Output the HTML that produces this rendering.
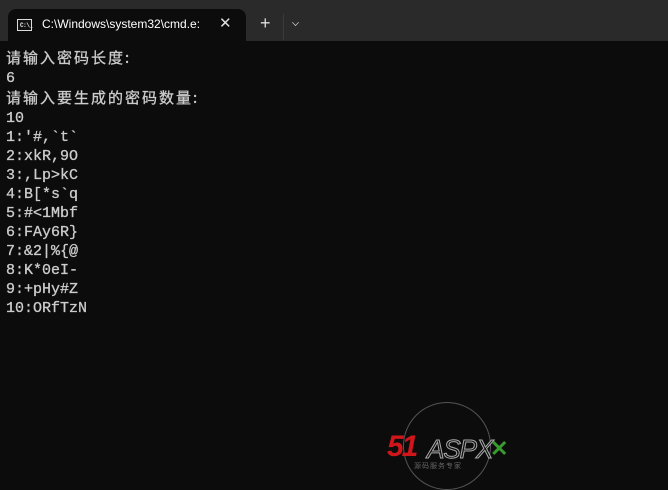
<!DOCTYPE html>
<html><head><meta charset="utf-8"><style>
*{margin:0;padding:0;box-sizing:border-box}
body{width:668px;height:490px;background:#0c0c0c;overflow:hidden;position:relative;font-family:"Liberation Sans",sans-serif}
.bar{position:absolute;left:0;top:0;width:668px;height:41px;background:#2a2a2a}
.tab{position:absolute;left:8px;top:9px;width:238px;height:32px;background:#0c0c0c;border-radius:8px 8px 0 0}
.icon{position:absolute;left:17px;top:19px;width:15px;height:12px;border:1px solid #ddd;background:#111}
.icon span{position:absolute;left:2px;top:2px;font:bold 6px "Liberation Mono",monospace;color:#eee;letter-spacing:-0.5px}
.title{position:absolute;left:42px;top:17px;font-size:12px;color:#fff;width:164px;overflow:hidden;white-space:nowrap}
.x{position:absolute;left:219px;top:14px;color:#ddd;font-size:15px}
.plus{position:absolute;left:260px;top:13px;color:#ddd;font-size:18px}
.sep{position:absolute;left:283px;top:14px;width:1px;height:26px;background:#3a3a3a}
.chev{position:absolute;left:292px;top:19px;width:7px;height:7px;border-right:1.3px solid #ccc;border-bottom:1.3px solid #ccc;transform:rotate(45deg) scale(.7)}
pre{position:absolute;left:6px;top:48px;font:15px/19px "Liberation Mono","Noto Sans CJK SC",monospace;color:#cccccc;-webkit-text-stroke:0.3px #cccccc}
.cjk{font-family:"Noto Sans CJK SC",sans-serif;letter-spacing:2px}
.logo{position:absolute;left:403px;top:402px;width:88px;height:88px;border:1px solid #555;border-radius:50%}
.l1{position:absolute;left:387px;top:430px;font:italic bold 30px "Liberation Sans",sans-serif;color:#d0161a;letter-spacing:-2px}
.l2{position:absolute;left:427px;top:434px;font:italic 26px "Liberation Sans",sans-serif;color:#111;-webkit-text-stroke:1px #aaa;letter-spacing:-1px}
.l3{position:absolute;left:490px;top:436px;font:bold 22px "Liberation Sans",sans-serif;color:#3a9a30}
.l4{position:absolute;left:414px;top:461px;font:7px "Noto Sans CJK SC",sans-serif;color:#666;letter-spacing:1px}
</style></head><body>
<div class="bar"></div>
<div class="tab"></div>
<div class="icon"><span>C:\_</span></div>
<div class="title">C:\Windows\system32\cmd.e:</div>
<div class="x">✕</div>
<div class="plus">+</div>
<div class="sep"></div>
<div class="chev"></div>
<pre><span class="cjk">请输入密码长度:</span>
6
<span class="cjk">请输入要生成的密码数量:</span>
10
1:'#,`t`
2:xkR,9O
3:,Lp>kC
4:B[*s`q
5:#<1Mbf
6:FAy6R}
7:&2|%{@
8:K*0eI-
9:+pHy#Z
10:ORfTzN</pre>
<div class="logo"></div>
<div class="l1">51</div>
<div class="l2">ASPX</div>
<div class="l3">✕</div>
<div class="l4">源码服务专家</div>
</body></html>
